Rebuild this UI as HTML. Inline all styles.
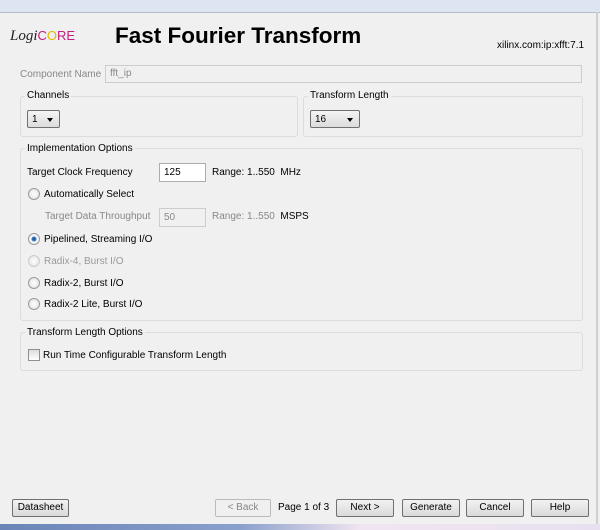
<!DOCTYPE html>
<html><head><style>
body{margin:0;width:600px;height:530px;overflow:hidden;background:#f0f0f0;font-family:"Liberation Sans",sans-serif;font-size:10px;color:#000;position:relative}
.a{position:absolute;white-space:nowrap}
.top{position:absolute;left:0;top:0;width:600px;height:12px;background:#dde5f2;border-bottom:1px solid #b8bcc4}
.grp{position:absolute;border:1px solid #dcdcdc;border-radius:3px}
.leg{position:absolute;background:#f0f0f0;padding:0 2px;font-size:10px}
.inp{position:absolute;background:#fff;border:1px solid #abadb3;box-sizing:border-box;padding:3px 4px;font-size:10px}
.dis{background:#f0f0f0;border-color:#ccc;color:#888}
.sel{position:absolute;border:1px solid #707070;border-radius:2px;background:linear-gradient(#f4f4f4,#dcdcdc);box-sizing:border-box;padding:3px 4px;font-size:10px}
.sel:after{content:"";position:absolute;right:6px;top:7px;border:3px solid transparent;border-top:4px solid #000}
.rad{position:absolute;width:10px;height:10px;border:1px solid #9a9a9a;border-radius:50%;background:radial-gradient(#fff,#ddd)}
.btn{position:absolute;height:18px;border:1px solid #707070;border-radius:2px;background:linear-gradient(#f2f2f2,#dadada);box-sizing:border-box;text-align:center;line-height:16px;font-size:10px}
</style></head><body>
<div class="top"></div>
<div class="a" style="left:596px;top:12px;width:2px;height:512px;background:#d0d0d0"></div>
<div class="a" style="left:0;top:524px;width:600px;height:6px;background:linear-gradient(90deg,#6a84b8,#8aa0cc 40%,#f0e4f0 60%,#e8e0f0)"></div>
<div class="a" style="left:10px;top:28px;font:italic 15px 'Liberation Serif',serif;color:#222">Logi<span style="color:#c02080;font-style:normal;font-family:'Liberation Sans';font-size:13px">C<span style="color:#e8b800">O</span>RE</span></div>
<div class="a" style="left:115px;top:23px;font-size:22.5px;font-weight:bold">Fast Fourier Transform</div>
<div class="a" style="left:497px;top:40px;font-size:10px">xilinx.com:ip:xfft:7.1</div>
<div class="a" style="left:20px;top:69px;color:#888">Component Name</div>
<div class="inp dis" style="left:105px;top:65px;width:477px;height:18px;padding-top:2px">fft_ip</div>
<div class="grp" style="left:20px;top:96px;width:276px;height:39px"></div>
<div class="leg" style="left:25px;top:90px">Channels</div>
<div class="sel" style="left:27px;top:110px;width:33px;height:18px">1</div>
<div class="grp" style="left:303px;top:96px;width:278px;height:39px"></div>
<div class="leg" style="left:308px;top:90px">Transform Length</div>
<div class="sel" style="left:310px;top:110px;width:50px;height:18px">16</div>
<div class="grp" style="left:20px;top:148px;width:561px;height:171px"></div>
<div class="leg" style="left:25px;top:143px">Implementation Options</div>
<div class="a" style="left:27px;top:167px">Target Clock Frequency</div>
<div class="inp" style="left:159px;top:163px;width:47px;height:19px">125</div>
<div class="a" style="left:212px;top:167px">Range: 1..550 &nbsp;MHz</div>
<div class="rad" style="left:28px;top:188px"></div><div class="a" style="left:44px;top:189px">Automatically Select</div>
<div class="a" style="left:45px;top:211px;color:#888">Target Data Throughput</div>
<div class="inp dis" style="left:159px;top:208px;width:47px;height:19px">50</div>
<div class="a" style="left:212px;top:211px"><span style="color:#888">Range: 1..550</span> &nbsp;MSPS</div>
<div class="rad" style="left:28px;top:233px;background:radial-gradient(#1a4f8c 0,#3a78c0 2px,#fff 3px,#ddd)"></div><div class="a" style="left:44px;top:234px">Pipelined, Streaming I/O</div>
<div class="rad" style="left:28px;top:255px;border-color:#ccc"></div><div class="a" style="left:44px;top:256px;color:#999">Radix-4, Burst I/O</div>
<div class="rad" style="left:28px;top:277px"></div><div class="a" style="left:44px;top:278px">Radix-2, Burst I/O</div>
<div class="rad" style="left:28px;top:298px"></div><div class="a" style="left:44px;top:299px">Radix-2 Lite, Burst I/O</div>
<div class="grp" style="left:20px;top:332px;width:561px;height:37px"></div>
<div class="leg" style="left:25px;top:327px">Transform Length Options</div>
<div class="a" style="left:28px;top:349px;width:10px;height:10px;border:1px solid #8f8f8f;background:linear-gradient(#ddd,#fff)"></div>
<div class="a" style="left:43px;top:350px">Run Time Configurable Transform Length</div>
<div class="btn" style="left:12px;top:499px;width:57px">Datasheet</div>
<div class="btn" style="left:215px;top:499px;width:56px;border-color:#bbb;color:#888;background:#f0f0f0">&lt; Back</div>
<div class="a" style="left:278px;top:502px">Page 1 of 3</div>
<div class="btn" style="left:336px;top:499px;width:58px">Next &gt;</div>
<div class="btn" style="left:402px;top:499px;width:58px">Generate</div>
<div class="btn" style="left:466px;top:499px;width:58px">Cancel</div>
<div class="btn" style="left:531px;top:499px;width:58px">Help</div>
</body></html>
